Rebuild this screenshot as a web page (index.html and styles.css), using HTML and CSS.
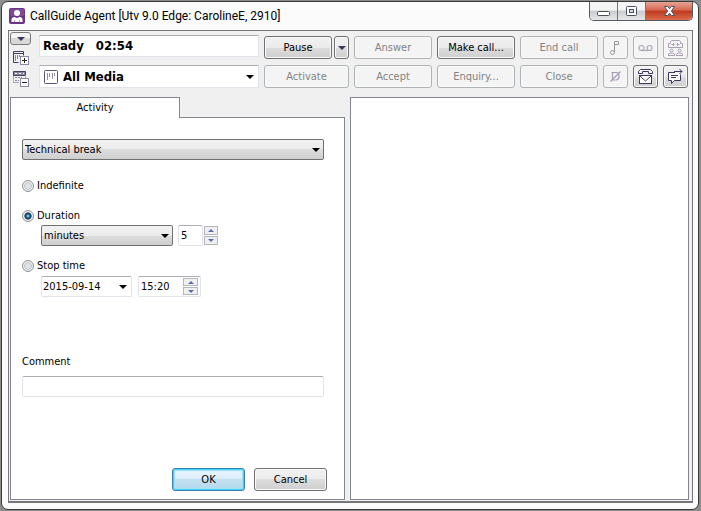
FILE: index.html
```html
<!DOCTYPE html>
<html lang="en">
<head>
<meta charset="utf-8">
<title>CallGuide Agent</title>
<link rel="stylesheet" href="styles.css">
</head>
<body>
<div class="window">
  <header class="titlebar">
    <svg class="app-icon" width="16" height="16" viewBox="0 0 16 16" aria-hidden="true">
      <rect width="16" height="16" rx="2" fill="#6b3586"/>
      <rect x="1" y="1" width="14" height="7" rx="1" fill="#7d4b96"/>
      <circle cx="8" cy="5" r="3" fill="#fff"/>
      <path d="M2.500 14v-2.500q0-2.500 3-2.500l2.500 1 2.500-1q3 0 3 2.500V14z" fill="#fff"/>
      <path d="M5.500 12v2M10.500 12v2" stroke="#b79bc5"/>
    </svg>
    <h1 class="title">CallGuide Agent [Utv 9.0 Edge: CarolineE, 2910]</h1>
    <div class="caption">
      <button class="cap" aria-label="Minimize"><svg width="13" height="12" viewBox="0 0 13 12"><rect x=".5" y="6.500" width="12" height="4" rx="1" fill="#fff" stroke="#4a4f5e"/></svg></button>
      <button class="cap" aria-label="Maximize"><svg width="13" height="12" viewBox="0 0 13 12"><rect x="1.500" y="1.500" width="10" height="9" rx="1" fill="#fff" stroke="#4a4f5e"/><rect x="4.500" y="4.500" width="4" height="3" fill="#ddd" stroke="#4a4f5e"/></svg></button>
      <button class="cap cap-close" aria-label="Close window"><svg width="13" height="12" viewBox="0 0 13 12"><path d="M1.500 1.500h3.200l1.800 2.300 1.800-2.300h3.200L8.400 6l3.100 4.500H8.300L6.500 8.200l-1.800 2.300H1.500L4.600 6z" fill="#fff" stroke="#50505f"/></svg></button>
    </div>
  </header>

  <main class="client">
    <div class="toolbar">
      <div class="views">
        <button class="mini" aria-label="Menu"><span class="arrow navy"></span></button>
        <button class="plain" aria-label="Add media view"><svg width="17" height="16" viewBox="0 0 17 16" fill="none" stroke="#443c62"><path d="M6.500 12.500h-5V1.500h10v4"/><path d="M1 3.500h11"/><path d="M3.500 5v6M5.500 5v4M7.500 5v2" stroke="#8d86a5"/><rect x="8.500" y="6.500" width="8" height="8" fill="#fff" stroke="#8d86a5"/><path d="M10 10.500h5M12.500 8v5" stroke="#222"/></svg></button>
        <button class="plain" aria-label="Remove keypad view"><svg width="17" height="16" viewBox="0 0 17 16" fill="none" stroke="#443c62"><path d="M1.500.5h12v4h-12z" fill="#8d86a5"/><path d="M3 2.500h2M7 2.500h2M11 2.500h1" stroke="#fff"/><path d="M1.500 5v6.500H7M13.500 4v3" stroke="#aaa5bb"/><path d="M3 6.500h7M3 9.500h4" stroke="#8d86a5" stroke-dasharray="2 1"/><rect x="8.500" y="7.500" width="8" height="8" fill="#fff" stroke="#8d86a5"/><path d="M10 11.500h5" stroke="#222"/></svg></button>
      </div>
      <div class="fields">
        <div class="status"><span>Ready</span><span>02:54</span></div>
        <div class="media">
          <svg width="14" height="14" viewBox="0 0 14 14" fill="none" stroke="#5b5475" aria-hidden="true"><rect x=".5" y=".5" width="13" height="13" rx="1" fill="#fff"/><path d="M3.500 3v7M5.500 3v4M8.500 3v6M10.500 3v3" stroke="#948eaa"/></svg>
          <select class="media-select" aria-label="Media"><option>All Media</option></select>
          <span class="arrow"></span>
        </div>
      </div>
      <div class="actions">
        <div class="split"><button class="btn">Pause</button><button class="btn" aria-label="Pause options"><span class="arrow navy"></span></button></div>
        <button class="btn" disabled>Answer</button>
        <button class="btn">Make call...</button>
        <button class="btn" disabled>End call</button>
        <button class="btn" disabled aria-label="Music"><svg width="17" height="17" viewBox="0 0 17 17" fill="none" stroke="#969696"><path d="M7.500 13V2.500h4v3h-4"/><circle cx="5.500" cy="13.500" r="2"/></svg></button>
        <button class="btn" disabled aria-label="Voicemail"><svg width="17" height="17" viewBox="0 0 17 17" fill="none" stroke="#aca7b7" stroke-width="1.200"><circle cx="4.500" cy="9" r="2.500"/><circle cx="12.500" cy="9" r="2.500"/><path d="M4 11.500h9"/></svg></button>
        <button class="btn" disabled aria-label="Conference"><svg width="17" height="17" viewBox="0 0 17 17" fill="none" stroke="#aca0b4"><path d="M3.500 4.500v-2l1-1h8l1 1v2M3.500 4.500h-2v4h14v-4h-2M6.500 4v3M10.500 4v3M4.500 5.500h3M9.500 5.500h3"/><circle cx="4.500" cy="11.500" r="1.500"/><circle cx="12.500" cy="11.500" r="1.500"/><path d="M1.500 17v-2l2-1h2l2 1v2M9.500 17v-2l2-1h2l2 1v2M1 16.500h7M9 16.500h7"/></svg></button>
        <button class="btn" disabled>Activate</button>
        <button class="btn" disabled>Accept</button>
        <button class="btn" disabled>Enquiry...</button>
        <button class="btn" disabled>Close</button>
        <button class="btn" disabled aria-label="Do not record"><svg width="17" height="17" viewBox="0 0 17 17" fill="none" stroke="#a39cb4" stroke-width="1.200"><path d="M4.500 4.500h5q2.500 0 2.500 3.500t-2.500 4h-5M5.500 4.500V12M3.500 13.500l10-10"/></svg></button>
        <button class="btn" aria-label="Phone mail"><svg width="17" height="17" viewBox="0 0 17 17" fill="none" stroke="#3d3561"><path d="M1.500 5.500v-2l2-2h10l2 2v2h-4v-2h-6v2z" fill="#f6f6f8"/><rect x="2.500" y="7.500" width="12" height="8" fill="#fff"/><path d="m3 8 5.500 5L14 8"/></svg></button>
        <button class="btn" aria-label="Forward message"><svg width="17" height="17" viewBox="0 0 17 17" fill="none" stroke="#3d3561"><path d="M8 4.500H1.500v8h3v3l3-3h6v-6" fill="#fff"/><path d="M4 7.500h7M4 9.500h5"/><path d="M7 3.500h8M12.500 1l2.500 2.500L12.500 6"/></svg></button>
      </div>
    </div>

    <div class="panels">
      <section class="left">
        <div class="tabs" role="tablist"><button class="tab" role="tab" aria-selected="true">Activity</button><span class="tab-rest"></span></div>
        <form class="form">
          <span class="drop activity"><select aria-label="Activity"><option>Technical break</option></select><span class="arrow"></span></span>
          <label class="choice"><input type="radio" name="end">Indefinite</label>
          <label class="choice duration"><input type="radio" name="end" checked>Duration</label>
          <div class="row">
            <span class="drop unit"><select aria-label="Unit"><option>minutes</option></select><span class="arrow"></span></span>
            <span class="number"><input class="box" type="text" value="5" aria-label="Amount"><span class="spin"><button type="button" aria-label="Increase"><span class="up"></span></button><button type="button" aria-label="Decrease"><span class="down"></span></button></span></span>
          </div>
          <label class="choice stop"><input type="radio" name="end">Stop time</label>
          <div class="row stop-row">
            <span class="box date"><input type="text" value="2015-09-14" aria-label="Stop date"><button type="button" aria-label="Open calendar"><span class="arrow"></span></button></span>
            <span class="box time"><input type="text" value="15:20" aria-label="Stop time"><span class="spin"><button type="button" aria-label="Later"><span class="up"></span></button><button type="button" aria-label="Earlier"><span class="down"></span></button></span></span>
          </div>
          <label class="comment-label" for="comment">Comment</label>
          <input class="box comment" id="comment" type="text">
          <div class="footer"><button type="button" class="btn primary">OK</button><button type="button" class="btn">Cancel</button></div>
        </form>
      </section>
      <section class="right" aria-label="Details"></section>
    </div>
  </main>
</div>
</body>
</html>
```
FILE: styles.css
```css
* { box-sizing: border-box; }

body {
  margin: 0;
  padding: 1px 2px 1px 1px;
  min-height: 100vh;
  display: flex;
  background: #8c8c8c;
  color: #000;
  font: 11px/14px "DejaVu Sans Condensed", "DejaVu Sans", sans-serif;
}

button, input, select {
  font: inherit;
  color: inherit;
  margin: 0;
  padding: 0;
}

button {
  display: flex;
  align-items: center;
  justify-content: center;
}

svg { display: block; flex: none; }

.window {
  flex: 1;
  display: flex;
  flex-direction: column;
  padding: 0 5px 6px 6px;
  border: 1px solid #3a3a3a;
  border-radius: 7px;
  background: #fbfbfb;
}

.titlebar {
  display: flex;
  align-items: center;
  gap: 5px;
  height: 28px;
  padding-left: 1px;
}

.title {
  flex: 1;
  margin: 0;
  font: 12px/16px Roboto, "Open Sans", sans-serif;
}

.caption {
  display: flex;
  align-self: flex-start;
  height: 19px;
  border: 1px solid #555b63;
  border-top: 0;
  border-radius: 0 0 5px 5px;
  overflow: hidden;
}

.cap {
  width: 28px;
  border: 0;
  border-right: 1px solid #70757c;
  background: linear-gradient(#f4f4f4 0 45%, #c9cbce 50%, #e6e7e9);
}

.cap-close {
  width: 46px;
  border-right: 0;
  background: linear-gradient(#e6a596, #d7674f 45%, #bd3a20 50%, #dc6b4b);
}

.client {
  flex: 1;
  display: flex;
  flex-direction: column;
  border: 1px solid #77777b;
  border-bottom-width: 2px;
  background: #f0f0f0;
}

.toolbar {
  display: flex;
  gap: 5px;
  padding: 4px 4px 9px 1px;
}

.views {
  display: flex;
  flex-direction: column;
  gap: 5px;
  width: 24px;
}

.plain {
  width: 20px;
  height: 16px;
  border: 0;
  background: none;
}

.mini {
  width: 21px;
  height: 13px;
  margin-top: -3px;
  border: 1px solid #7a7a7a;
  border-radius: 3px;
  background: linear-gradient(#f4f4f4 50%, #d8d8d8 50%);
}

.arrow {
  border: solid transparent;
  border-width: 4px 4px 0;
  border-top-color: #000;
  flex: none;
}

.arrow.navy { border-top-color: #3d3561; }

.fields {
  flex: 1;
  display: flex;
  flex-direction: column;
  gap: 8px;
  min-width: 0;
  font-size: 13px;
  font-weight: bold;
}

.status, .media {
  display: flex;
  align-items: center;
  height: 22px;
  padding: 0 4px 0 3px;
  border: 1px solid #e2e3ea;
  border-top-color: #abadb3;
  background: #fff;
}

.status { gap: 12px; }

.media { gap: 5px; height: 23px; padding-left: 4px; }

.media-select {
  flex: 1;
  min-width: 0;
  border: 0;
  background: none;
  appearance: none;
}

.actions {
  display: grid;
  grid-template-columns: 85px repeat(3, 78px) repeat(3, 25px);
  grid-auto-rows: 23px;
  gap: 6px 5px;
  padding-top: 1px;
}

.split {
  display: grid;
  grid-template-columns: 1fr 15px;
  gap: 2px;
}

.btn {
  border: 1px solid #707070;
  border-radius: 3px;
  background: linear-gradient(#f2f2f2, #ebebeb 50%, #dddddd 50%, #cfcfcf);
  box-shadow: inset 0 0 0 1px #fafafa;
}

.btn:disabled {
  border-color: #adb2b5;
  background: #f4f4f4;
  color: #838383;
}

.panels {
  flex: 1;
  display: grid;
  grid-template-columns: 335px 1fr;
  gap: 5px;
  padding: 0 3px 1px 1px;
}

.left { display: flex; flex-direction: column; }

.right {
  border: 1px solid #828790;
  background: #fff;
}

.tabs { display: flex; height: 21px; }

.tab {
  width: 170px;
  border: 1px solid #828790;
  border-bottom: 0;
  background: #fff;
}

.tab-rest { flex: 1; border-bottom: 1px solid #828790; }

.form {
  flex: 1;
  display: flex;
  flex-direction: column;
  align-items: flex-start;
  padding: 21px 17px 8px 11px;
  border: 1px solid #828790;
  border-top: 0;
  background: #fff;
}

.drop { position: relative; }

.drop select {
  display: block;
  width: 100%;
  height: 21px;
  padding: 0 2px;
  border: 1px solid #707070;
  border-radius: 2px;
  background: linear-gradient(#f2f2f2, #ebebeb 50%, #dddddd 50%, #cfcfcf);
  appearance: none;
}

.drop .arrow {
  position: absolute;
  right: 4px;
  top: 9px;
  pointer-events: none;
}

.activity { width: 302px; margin-bottom: 20px; }

.unit { width: 132px; }

.choice {
  display: flex;
  align-items: center;
  gap: 3px;
  height: 12px;
}

.choice input {
  width: 12px;
  height: 12px;
  border: 1px solid #8e8f8f;
  border-radius: 50%;
  background: radial-gradient(#dfe2e5 35%, #c3c7cb 50%, #f4f4f4 62%);
  appearance: none;
}

.choice input:checked {
  background: radial-gradient(circle at 50% 50%, #6fc4e8 0 8%, #1b5b86 30%, #0f2f50 46%, #f4f4f4 56%);
}

.duration { margin-top: 18px; }
.stop { margin-top: 14px; }

.row {
  display: flex;
  gap: 5px;
  margin: 3px 0 0 19px;
}

.stop-row { gap: 6px; margin-top: 4px; }

.box {
  height: 21px;
  padding: 0 2px;
  border: 1px solid #e2e3ea;
  border-top-color: #abadb3;
  border-radius: 2px;
  background: #fff;
}

.number { display: flex; align-items: center; gap: 1px; }
.number .box { width: 25px; }

.date, .time { display: flex; align-items: center; }
.date { width: 91px; padding: 0 4px 0 1px; }
.time { width: 63px; }

.date input, .time input {
  flex: 1;
  min-width: 0;
  border: 0;
  outline: 0;
  background: none;
}

.date button { border: 0; background: none; }

.spin { display: grid; gap: 1px; }

.spin button {
  width: 14px;
  height: 9px;
  border: 1px solid #b4b6bb;
  background: #f0f0f0;
}

.time .spin button { width: 15px; height: 8px; }

.up, .down {
  border: solid transparent;
  border-width: 0 3px 3px;
  border-bottom-color: #5a6cad;
}

.down {
  border-width: 3px 3px 0;
  border-top-color: #5a6cad;
}

.comment-label { margin-top: 58px; }
.comment { width: 302px; margin-top: 7px; }

.footer {
  display: flex;
  gap: 9px;
  margin-top: auto;
  align-self: flex-end;
}

.footer .btn { width: 73px; height: 23px; }

.footer .primary {
  border-color: #3c7fb1;
  background: linear-gradient(#eaf6fd, #d9eefa 50%, #c2e0f0 50%, #b5d9ec);
  box-shadow: inset 0 0 0 1px #45d0f8, inset 0 0 1px 2px #9be3f8;
}
```
